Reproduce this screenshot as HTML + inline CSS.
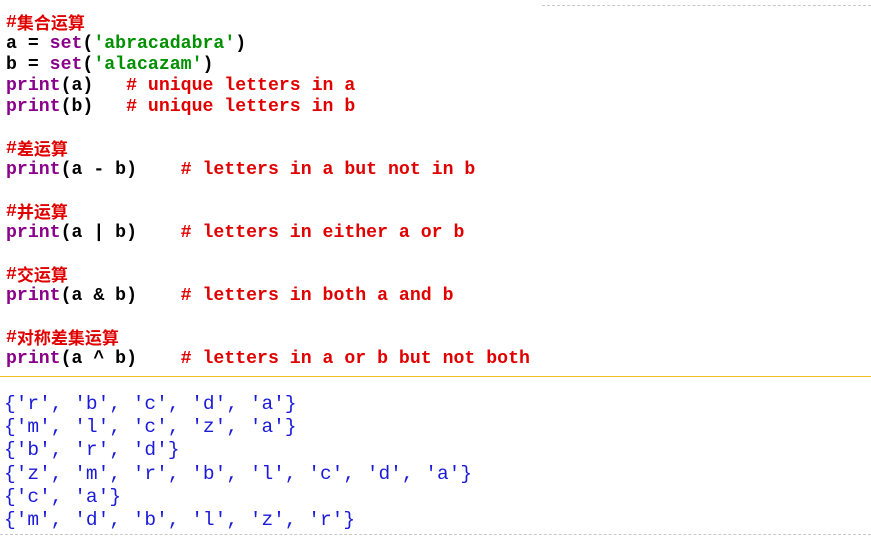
<!DOCTYPE html>
<html><head><meta charset="utf-8"><style>
html,body{margin:0;padding:0;background:#fff;width:871px;height:536px;overflow:hidden;position:relative}
.code{position:absolute;left:6px;top:13px;font:bold 18.2px "Liberation Mono",monospace;color:#000}
.code div{height:21px;line-height:21px;white-space:pre;overflow:visible}
.r{color:#e00000}.p{color:#8b008b}.g{color:#009000}
.cj{font-family:"Noto Sans CJK SC",sans-serif;font-size:17px;font-weight:bold;line-height:21px;vertical-align:top;position:relative;top:-2px}
.out{position:absolute;left:4px;top:393px;font:19.5px/23.2px "Liberation Mono",monospace;white-space:pre;color:#1a1ad8}
.sep{position:absolute;left:0;top:376px;width:871px;height:1px;background:#f0c020}
.dt{position:absolute;left:542px;top:5px;width:329px;border-top:1px dashed #c8c8c8}
.db{position:absolute;left:0;top:534px;width:871px;border-top:1px dashed #c8c8c8}
</style></head><body>
<div class="dt"></div>
<div class="code"><div class="r">#<span class="cj">集合运算</span></div><div>a = <span class="p">set</span>(<span class="g">'abracadabra'</span>)</div><div>b = <span class="p">set</span>(<span class="g">'alacazam'</span>)</div><div><span class="p">print</span>(a)   <span class="r"># unique letters in a</span></div><div><span class="p">print</span>(b)   <span class="r"># unique letters in b</span></div><div> </div><div class="r">#<span class="cj">差运算</span></div><div><span class="p">print</span>(a - b)    <span class="r"># letters in a but not in b</span></div><div> </div><div class="r">#<span class="cj">并运算</span></div><div><span class="p">print</span>(a | b)    <span class="r"># letters in either a or b</span></div><div> </div><div class="r">#<span class="cj">交运算</span></div><div><span class="p">print</span>(a &amp; b)    <span class="r"># letters in both a and b</span></div><div> </div><div class="r">#<span class="cj">对称差集运算</span></div><div><span class="p">print</span>(a ^ b)    <span class="r"># letters in a or b but not both</span></div></div>
<div class="sep"></div>
<div class="out">{'r', 'b', 'c', 'd', 'a'}
{'m', 'l', 'c', 'z', 'a'}
{'b', 'r', 'd'}
{'z', 'm', 'r', 'b', 'l', 'c', 'd', 'a'}
{'c', 'a'}
{'m', 'd', 'b', 'l', 'z', 'r'}</div>
<div class="db"></div>
</body></html>
